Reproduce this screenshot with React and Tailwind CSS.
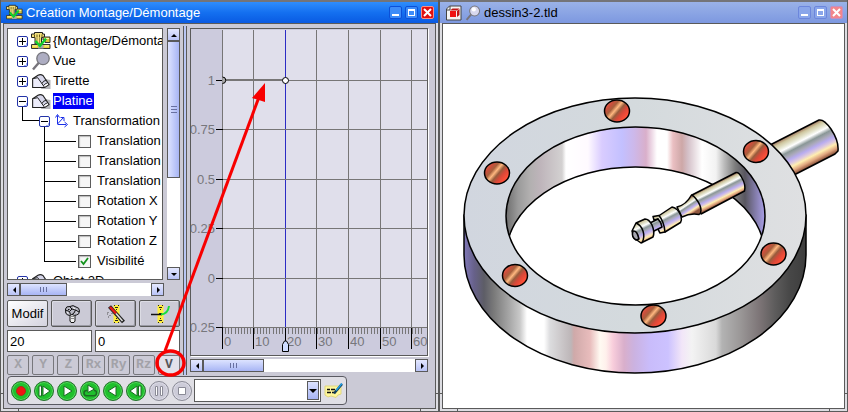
const leaves = [
  { id: 'tx', label: 'Translation' },
  { id: 'ty', label: 'Translation' },
  { id: 'tz', label: 'Translation' },
  { id: 'rx', label: 'Rotation X' },
  { id: 'ry', label: 'Rotation Y' },
  { id: 'rz', label: 'Rotation Z' },
  { id: 'vis', label: 'Visibilité', checked: true },
];

const channels = ['X', 'Y', 'Z', 'Rx', 'Ry', 'Rz', 'V'];

const gridX = [
  { x: 31, label: '0' },
  { x: 62, label: '10' },
  { x: 94, label: '20' },
  { x: 125, label: '30' },
  { x: 157, label: '40' },
  { x: 189, label: '50' },
  { x: 220, label: '60' },
];

const gridY = [
  { y: 51, label: '1' },
  { y: 100, label: '0.75' },
  { y: 150, label: '0.5' },
  { y: 199, label: '0.25' },
  { y: 249, label: '0' },
  { y: 298, label: '0.25' },
];

const bolts = [
  [617, 111],
  [756, 151.5],
  [497, 173],
  [515, 275.5],
  [773.5, 254],
  [653.5, 316],
];

const innerWall = [
  [506, '#6e6e6e'], [518, '#9a9a9a'], [530, '#b2b0b0'], [540, '#beb4ba'], [562, '#d3d1d1'], [566, '#ffffff'],
  [588, '#fffaff'], [602, '#d9ccff'], [622, '#c3c0ff'], [634, '#cdb8ea'], [646, '#d9afca'], [657, '#ffffff'],
  [667, '#ffffff'], [673, '#eabfc2'], [682, '#cda7a7'], [688, '#d4c0c8'], [702, '#ffffff'], [716, '#f2f2f2'],
  [724, '#bdbdbd'], [735, '#7d7d7d'], [745, '#58565f'], [754, '#7d77a0'], [765, '#aaa0e8'],
];

const outerWall = [
  [464, '#8078b8'], [474, '#67618a'], [484, '#5d5d66'], [494, '#7a7a7a'], [510, '#a9a9a9'], [520, '#c9c9c9'],
  [527, '#ffffff'], [544, '#ffffff'], [550, '#dcdcde'], [571, '#bdb6b8'], [574, '#cfa9a9'], [590, '#e8bcbc'],
  [600, '#fffaf2'], [606, '#fff0ec'], [613, '#f8cddb'], [624, '#d9afcb'], [634, '#cbb2e0'], [650, '#c9bcfb'],
  [668, '#ccc2ff'], [682, '#f2e6f8'], [692, '#f3f3f3'], [716, '#d9d9d9'], [722, '#b3b3b3'], [740, '#9b9898'],
  [760, '#7c7476'], [775, '#5d5c5c'], [790, '#474747'], [806, '#3d3d3d'],
];

const rodStops = [
  [0, '#9c6f58'], [10, '#cfc79f'], [22, '#e9ead8'], [29, '#ffffff'], [40, '#8a9797'], [50, '#a9a9b8'],
  [60, '#b8acf0'], [70, '#ddc9de'], [79, '#ffeeb0'], [90, '#e0a57e'], [100, '#8f573f'],
];

function WindowButton({ kind, inactive }) {
  const color = kind === 'close'
    ? (inactive ? 'bg-[#f2868c] border-[#c58fc0]' : 'bg-[#e01010] border-[#ff8a80]')
    : (inactive ? 'bg-[#8aa6ea] border-[#6c86dc]' : 'bg-[#3d8cf8] border-[#0b50d8]');
  return (
    <button type="button" aria-label={kind} className={`w-[13px] h-[13px] border rounded-xs flex items-center justify-center ${color}`}>
      <svg className="w-[11px] h-[11px]" viewBox="0 0 11 11" fill="none" stroke="white" shapeRendering={kind === 'close' ? 'auto' : 'crispEdges'}>
        {kind === 'minimize' && <path d="M2 8h7" strokeWidth="2" />}
        {kind === 'maximize' && <path d="M2.500 3h6v5.500h-6zM2 2.500h7" strokeWidth="1.300" />}
        {kind === 'close' && <path d="M2 2l7 7M9 2l-7 7" strokeWidth="2" />}
      </svg>
    </button>
  );
}

function WindowFrame({ title, icon, inactive, children }) {
  return (
    <section className="relative flex flex-col min-w-0 border-l border-r border-b border-[#5a5a5a] bg-[#dddde2]">
      <header className={`h-[23px] shrink-0 flex items-center gap-[3px] pr-1 border-t-2 border-[#747478] bg-linear-to-b ${inactive ? 'pl-[6px] from-[#9ab2e8] to-[#7d98e0]' : 'pl-[5px] from-[#2f8dfc] via-[#1470f0] to-[#0a5ae2]'}`}>
        {icon}
        <h1 className={`flex-1 truncate text-[13px] leading-4 ${inactive ? 'text-black' : 'text-white'}`}>{title}</h1>
        <div className="flex gap-[3px]">
          <WindowButton kind="minimize" inactive={inactive} />
          <WindowButton kind="maximize" inactive={inactive} />
          <WindowButton kind="close" inactive={inactive} />
        </div>
      </header>
      <div className="flex-1 flex flex-col mx-[2px] mb-[2px] border border-[#5a5a5a]">{children}</div>
      {/* resize corner marks */}
      <span className="absolute left-0 bottom-[17px] w-[3px] h-px bg-[#5a5a5a]" />
      <span className="absolute right-0 bottom-[17px] w-[3px] h-px bg-[#5a5a5a]" />
      <span className="absolute left-[17px] bottom-0 w-px h-[3px] bg-[#5a5a5a]" />
      <span className="absolute right-[17px] bottom-0 w-px h-[3px] bg-[#5a5a5a]" />
    </section>
  );
}

function AssemblyIcon({ small }) {
  return (
    <svg className={small ? 'w-[17px] h-[17px] shrink-0' : 'w-5 h-5 shrink-0'} viewBox="0 0 20 20">
      <path d="M.5 3h3V1.500h8V3h2v3.500h-3V13H4V6.500H.5z" fill="#f4e27c" stroke="#222" />
      <path d="M3.500 3.500v3M6 3.500v3M8.500 3.500v3M11 3.500v3" stroke="#6a5a18" />
      <path d="M6 7v6M8.500 7v6" stroke="#8a7c40" strokeWidth=".8" />
      <path d="M12 6h7v5.500h-5V9h-2z" fill="#d8c83c" stroke="#333" />
      <path d="M13 7.500h5" stroke="#fff8b8" />
      <path d="M.5 13.500h18.500v4H.5z" fill="#e8cf3c" stroke="#333" />
      <path d="M7 14h5.500v3.500H7z" fill="#a8a8a8" />
      <path d="M1.500 15h4.500M13.500 15h4.500" stroke="#fff6a8" />
      <path d="M4.500 10l4.500 5 6-7.500" fill="none" stroke="#0fd02c" strokeWidth="2.400" />
    </svg>
  );
}

function LensIcon({ small }) {
  return (
    <svg className={small ? 'w-4 h-4 shrink-0' : 'w-5 h-5 shrink-0'} viewBox="0 0 20 20">
      <path d="M2 18.500l6-7" stroke="#77747c" strokeWidth="2.400" />
      <circle cx="12" cy="7.500" r="6.200" fill={small ? '#d8d8ee' : '#adadc2'} stroke="#76767c" strokeWidth="1.300" />
      {small && <circle cx="11" cy="5.500" r="2.600" fill="#fff" />}
    </svg>
  );
}

function SolidIcon() {
  return (
    <svg className="w-5 h-5 shrink-0" viewBox="0 0 20 20">
      <path d="M14 8l5.500 1v9H10z" fill="#b4b4ba" />
      <path d="M1.700 7.700L7 4.200Q9.500 3 12 4.500L18 13.500 13.500 16.500H1.700z" fill="#d6d6ea" stroke="#222" strokeWidth="1.200" strokeLinejoin="round" />
      <path d="M1.700 7.700l5-1 7 9.800H1.700z" fill="#ececfa" stroke="#222" strokeLinejoin="round" />
      <path d="M11 12.500q1-3 4.500-3.200M12.500 15q1-2.500 4.500-3.300" fill="none" stroke="#222" />
      <path d="M13 14.500l3.500-2.300.8 1.200-3.500 2.400z" fill="#fff" />
    </svg>
  );
}

function AxesIcon() {
  return (
    <svg className="w-4 h-4 shrink-0" viewBox="0 0 16 16" fill="none" stroke="#1a2ee8">
      <path d="M3.500 11V2.500M1.500 4.500l2-3 2 3M3.500 11.500H12M10.500 9l3 2.500-3 2.500M3.500 11L9.500 4.500M6.500 4.500h3.500v3.500" />
    </svg>
  );
}

function Expander({ open, label }) {
  return (
    <span className="h-5 w-[11px] pt-[5px] flex flex-col items-center shrink-0">
      <button type="button" aria-label={label} aria-expanded={Boolean(open)} className="w-[11px] h-[11px] shrink-0 border border-[#2333a8] rounded-xs bg-white flex items-center justify-center">
        <svg className="w-[9px] h-[9px]" viewBox="0 0 9 9" stroke="#000" shapeRendering="crispEdges">
          <path d="M6 8.500h3M8.500 6v3" stroke="#9fb0f0" />
          <path d={open ? 'M1 4.500h7' : 'M1 4.500h7M4.500 1v7'} />
        </svg>
      </button>
      {open && <span className="w-px flex-1 bg-black" />}
    </span>
  );
}

function Branch({ icon, label, open, selected }) {
  return (
    <li className="h-5 flex items-center gap-[2px] pl-[9px]">
      <Expander open={open} label={label} />
      <span className="ml-px flex">{icon}</span>
      <span className={selected ? 'bg-[#0000f8] text-white leading-4 pr-px' : 'leading-4'}>{label}</span>
    </li>
  );
}

function Leaf({ id, label, checked, last }) {
  return (
    <li className="h-5 flex items-center">
      <span className="ml-9 mr-[2px] w-8 self-stretch shrink-0 flex flex-col">
        <span className="flex-1 border-l border-b border-black" />
        <span className={last ? 'flex-1' : 'flex-1 border-l border-black'} />
      </span>
      <span className="grid shrink-0 place-items-center">
        <input
          id={id}
          type="checkbox"
          defaultChecked={checked}
          className="peer appearance-none col-start-1 row-start-1 w-[13px] h-[13px] border border-[#5c5c5c] bg-[#f6f6f6] shadow-[inset_1px_1px_1px_#b8b8b8]"
        />
        <svg className="hidden peer-checked:block pointer-events-none z-10 col-start-1 row-start-1 w-[13px] h-[13px]" viewBox="0 0 13 13" fill="none">
          <path d="M3 6l2.500 3 4.500-6" stroke="#12921c" strokeWidth="1.800" />
        </svg>
      </span>
      <label htmlFor={id} className="ml-[6px] leading-4">{label}</label>
    </li>
  );
}

function ScrollArrow({ dir }) {
  const paths = {
    up: 'M2 7h6L5 4z',
    down: 'M2 4h6L5 7z',
    left: 'M7 2v6L4 5z',
    right: 'M4 2v6l3-3z',
  };
  return (
    <button type="button" aria-label={dir} className="w-[13px] h-[13px] shrink-0 border border-[#5a5a5a] bg-linear-to-b from-[#e4e8ff] to-[#b9c3f6] flex items-center justify-center">
      <svg className="w-[10px] h-[10px]" viewBox="0 0 10 10"><path d={paths[dir]} fill="#000" /></svg>
    </button>
  );
}

function HScroll({ thumb }) {
  return (
    <div className="h-[13px] flex bg-white">
      <ScrollArrow dir="left" />
      <div className={`${thumb} border border-[#5a5a5a] bg-linear-to-b from-[#dde3ff] to-[#a8b5f4] flex items-center justify-center gap-[2px]`}>
        <span className="w-px h-[5px] bg-[#6870a0]" />
        <span className="w-px h-[5px] bg-[#6870a0]" />
        <span className="w-px h-[5px] bg-[#6870a0]" />
      </div>
      <div className="flex-1" />
      <ScrollArrow dir="right" />
    </div>
  );
}

function TreePanel() {
  return (
    <div>
      <div className="flex gap-1">
        <ul className="flex-1 min-w-0 h-63 pt-[2px] border border-[#5a5a5a] bg-white overflow-hidden whitespace-nowrap">
          <Branch icon={<AssemblyIcon />} label="{Montage/Démonta" />
          <Branch icon={<LensIcon />} label="Vue" />
          <Branch icon={<SolidIcon />} label="Tirette" />
          <Branch icon={<SolidIcon />} label="Platine" open selected />
          <li className="h-5 flex items-center">
            <span className="ml-[14px] w-[17px] h-[10px] self-start shrink-0 border-l border-b border-black" />
            <Expander open label="Transformation" />
            <span className="ml-1 mr-[3px] flex"><AxesIcon /></span>
            <span className="leading-4">Transformation</span>
          </li>
          {leaves.map((leaf, i) => (
            <Leaf key={leaf.id} {...leaf} last={i === leaves.length - 1} />
          ))}
          <Branch icon={<SolidIcon />} label="Objet 2D" />
        </ul>
        <div className="w-[13px] shrink-0 flex flex-col bg-white">
          <ScrollArrow dir="up" />
          <div className="h-[137px] border border-[#5a5a5a] bg-linear-to-r from-[#dde3ff] to-[#a8b5f4] flex flex-col items-center justify-center gap-[2px]">
            <span className="h-px w-[6px] bg-[#6870a0]" />
            <span className="h-px w-[6px] bg-[#6870a0]" />
            <span className="h-px w-[6px] bg-[#6870a0]" />
          </div>
          <div className="flex-1" />
          <ScrollArrow dir="down" />
        </div>
      </div>
      <div className="mt-[3px] mr-4">
        <HScroll thumb="w-[47px]" />
      </div>
    </div>
  );
}

function ToolButton({ label, children }) {
  return (
    <button type="button" aria-label={label} className="h-[27px] border border-[#5a5a5a] rounded-xs bg-[#cbcad6] shadow-[inset_-1px_-1px_0_#9a9aa4,inset_1px_1px_0_#dcdce4] flex items-center justify-center">
      {children}
    </button>
  );
}

function YellowRuler() {
  return (
    <>
      <path d="M7.500 1h6v18h-6z" fill="#ffee3c" />
      <path d="M8 1.500h1M12 1.500h1M9 3.500h3M10 5.500h1M8 18.500h1M12 18.500h1M9 16.500h3M10 14.500h1M9 9.500h3" stroke="#222" />
    </>
  );
}

function EditPanel() {
  return (
    <div className="mt-1 flex flex-col gap-[3px]">
      <div className="grid grid-cols-4 gap-[3px]">
        <button type="button" className="h-[27px] border border-[#5a5a5a] rounded-xs bg-linear-to-br from-white to-[#d4d3df] text-black">Modif</button>
        <ToolButton label="Vis">
          <svg className="w-5 h-5" viewBox="0 0 20 20" fill="#c4c4ca" stroke="#111">
            <path d="M8 10h5v7l-1 1.500H9L8 17z" fill="#f2f2f2" />
            <path d="M8.500 12.500h4M8.500 14.500h4" stroke="#888" />
            <path d="M3.500 5Q4 2 8 2.500 11 .5 14 3q3.500.5 3.500 4t-3 4q-2 1-4.500-.5-2 1.500-4.500.5Q3 10 3.500 5z" fill="#b9b9c4" />
            <path d="M3.500 6l4 1.500L10 5l3.500 1 3.500 2M7.500 7.500l1 3M13.500 6L12 9l-2 1.500M8 3l2 2M6 5.500h1.500" fill="none" />
            <path d="M11 3.500l2 1.500M5 8.500l1.500.8M14.500 8l1 .8" stroke="#fff" />
          </svg>
        </ToolButton>
        <ToolButton label="Mesure">
          <svg className="w-5 h-5" viewBox="0 0 20 20" fill="none">
            <YellowRuler />
            <path d="M3.500 2.500L17.500 18" stroke="#222" strokeWidth="4" />
            <path d="M4 3l6 6.500" stroke="#e81818" strokeWidth="2.500" />
            <path d="M10 9.500l6.500 7.500" stroke="#e0e0e0" strokeWidth="1.500" />
            <path d="M2 8v1M1 10h1M4 11v1M6 9v1M2 13h1" stroke="#555" />
          </svg>
        </ToolButton>
        <ToolButton label="Courbe">
          <svg className="w-5 h-5" viewBox="0 0 20 20" fill="none">
            <YellowRuler />
            <path d="M1 10.500h11" stroke="#111" strokeWidth="1.500" />
            <path d="M11 10.500Q18 10 19 2" stroke="#18e038" strokeWidth="2" />
          </svg>
        </ToolButton>
      </div>
      <div className="grid grid-cols-2 gap-[3px]">
        <input aria-label="Temps" defaultValue="20" className="min-w-0 h-[22px] px-[2px] border border-[#5a5a5a] bg-white" />
        <input aria-label="Valeur" defaultValue="0" className="min-w-0 h-[22px] px-[2px] border border-[#5a5a5a] bg-white" />
      </div>
      <div className="grid grid-cols-7 gap-[3px]">
        {channels.map((name) => (
          <button
            key={name}
            type="button"
            className={`h-5 border rounded-xs font-['Liberation_Mono',monospace] font-bold leading-4 ${name === 'V' ? 'border-[#77777c] bg-[#e2e1ea] text-[#55555a]' : 'border-[#77777c] bg-[#cbcad6] text-[#a2a2a8]'}`}
          >
            {name}
          </button>
        ))}
      </div>
    </div>
  );
}

function CurveChart() {
  const minorTicks = Array.from({ length: 64 }, (_, i) => Math.round(31 + i * 3.16));
  return (
    <div className="border border-[#5a5a5a] bg-[#cccbdd] shadow-[1px_1px_0_#fff]">
      <svg className="block w-full h-[326px]" shapeRendering="crispEdges">
        <rect x="31" y="1" width="100%" height="297" fill="#e0dfeb" />
        <g stroke="#777676">
          {gridX.map(({ x }) => <line key={x} x1={x + 0.5} x2={x + 0.5} y1="1" y2="298" stroke={x === 94 ? '#2c2cc4' : '#777676'} />)}
          {gridY.map(({ y }) => <line key={y} x1="31" x2="100%" y1={y + 0.5} y2={y + 0.5} />)}
          {minorTicks.map((x) => <path key={x} d={`M${x + 0.5} 298v7`} />)}
        </g>
        <g stroke="#000">
          {gridY.map(({ y }) => <path key={y} d={`M25 ${y + 0.5}h7`} />)}
          {gridX.map(({ x }) => <path key={x} d={`M${x + 0.5} 299v21`} />)}
        </g>
        <g fill="#77777c" fontSize="13">
          {gridY.map(({ y, label }) => <text key={y} x="24" y={y + 5} textAnchor="end">{label}</text>)}
          {gridX.map(({ x, label }) => <text key={x} x={x + 2} y="317">{label}</text>)}
        </g>
        <path d="M31 51h63" stroke="#777676" strokeWidth="2" />
        <g stroke="#000" shapeRendering="auto">
          <path d="M31.500 48a3 3 0 0 1 0 6.500" fill="#aaa" />
          <circle cx="94.500" cy="51.500" r="3" fill="#fff" />
          <path d="M91.500 322.500v-7l2-3.500h2l2 3.500v7z" fill="#cfdcff" />
        </g>
      </svg>
    </div>
  );
}

function PlayButton({ label, disabled, children }) {
  return (
    <button
      type="button"
      aria-label={label}
      className={`w-5 h-5 shrink-0 rounded-full border flex items-center justify-center ${disabled ? 'border-[#8a8a96] bg-[#cccbd8] shadow-[inset_0_0_0_1px_#dedde8]' : 'border-[#28702e] bg-[#1fc02c] shadow-[inset_0_0_0_1px_#58d860]'}`}
    >
      <svg className="w-[18px] h-[18px]" viewBox="0 0 18 18" stroke="#1c6a22">{children}</svg>
    </button>
  );
}

function Playback() {
  return (
    <div className="mt-px self-start flex items-center h-[29px] pl-[3px] pr-[2px] border border-[#5a5a62] rounded-sm bg-[#e0dfe5]">
      <div className="flex gap-[3px]">
        <PlayButton label="Enregistrer"><circle cx="9" cy="9" r="4.500" fill="#f01414" stroke="#a83018" /></PlayButton>
        <PlayButton label="Pas avant"><path d="M4 4h2.500v10H4zM8 4l7 5-7 5z" fill="#fff" /></PlayButton>
        <PlayButton label="Lecture"><path d="M6 4l8 5-8 5z" fill="#fff" /></PlayButton>
        <PlayButton label="Boucle">
          <path d="M6.500 8.500H5.500q-2.500 0-2.500 2.500t2.500 2.700h7.500q2.500 0 2.500-2.700T13 8.500" fill="none" strokeWidth="1.500" />
          <path d="M7 3l6.500 4L7 10.500z" fill="#fff" />
        </PlayButton>
        <PlayButton label="Lecture arrière"><path d="M12 4L4 9l8 5z" fill="#fff" /></PlayButton>
        <PlayButton label="Pas arrière"><path d="M11.500 4h2.500v10h-2.500zM10 4L3 9l7 5z" fill="#fff" /></PlayButton>
        <PlayButton label="Pause" disabled><path d="M5.500 4.500h2v9h-2zM10.500 4.500h2v9h-2z" fill="#fff" stroke="#8a8a96" /></PlayButton>
        <PlayButton label="Arrêt" disabled><path d="M5.500 5.500h7v7h-7z" fill="#fff" stroke="#8a8a96" /></PlayButton>
      </div>
      <div className="ml-[2px] h-[23px] grid">
        <select aria-label="Animation" className="appearance-none col-start-1 row-start-1 w-[127px] border border-[#5a5a5a] bg-white px-1">
          <option></option>
        </select>
        <span className="pointer-events-none z-10 col-start-1 row-start-1 justify-self-end my-[2px] mr-[2px] w-3 border border-[#5a5a5a] bg-linear-to-b from-[#dde3ff] to-[#a8b5f4] flex items-center justify-center">
          <svg className="w-2 h-2" viewBox="0 0 8 8"><path d="M0 2h8L4 6z" fill="#000" /></svg>
        </span>
      </div>
      <button type="button" aria-label="Notes" className="ml-[3px]">
        <svg className="w-5 h-5" viewBox="0 0 20 20" fill="none">
          <path d="M1 5h16v8l-3 1-2 2.500-5-1.500-3 1-3-2z" fill="#fff79a" stroke="#e0d680" />
          <path d="M3 8.500h3M7 8.500h4M3 11.500h4M8 11.500h2" stroke="#111" strokeWidth="1.500" />
          <path d="M10 12.500l8-9.500" stroke="#123c58" strokeWidth="2.500" />
          <path d="M12 9.500l6-7" stroke="#20a0e8" strokeWidth="1.500" />
        </svg>
      </button>
    </div>
  );
}

function Arrow() {
  return (
    <svg className="absolute left-0 top-0 z-20 w-[300px] h-[400px] pointer-events-none" viewBox="1 0 300 400" fill="none" stroke="#f80000">
      <path d="M165 351L259 97" strokeWidth="3" />
      <path d="M265 83l-13 15 13 4z" fill="#f80000" stroke="none" />
      <ellipse cx="170.500" cy="363" rx="13.500" ry="12" strokeWidth="3.500" />
    </svg>
  );
}

function WallGradient({ id, from, to, stops }) {
  return (
    <linearGradient id={id} gradientUnits="userSpaceOnUse" x1={from} x2={to} y1="0" y2="0">
      {stops.map(([x, color]) => <stop key={x} offset={(x - from) / (to - from)} stopColor={color} />)}
    </linearGradient>
  );
}

function RodGradient({ id, x1, y1, x2, y2 }) {
  return (
    <linearGradient id={id} gradientUnits="userSpaceOnUse" x1={x1} y1={y1} x2={x2} y2={y2}>
      {rodStops.map(([p, color]) => <stop key={p} offset={`${p}%`} stopColor={color} />)}
    </linearGradient>
  );
}

function PartView() {
  return (
    <svg className="flex-1 w-full bg-white" viewBox="443 24 401 384" stroke="#000" strokeWidth="1.500" strokeLinejoin="round">
      <defs>
        <WallGradient id="inner" from={506} to={765} stops={innerWall} />
        <WallGradient id="outer" from={464} to={806} stops={outerWall} />
        <linearGradient id="face">
          <stop offset="0" stopColor="#d1d6df" />
          <stop offset=".5" stopColor="#d4dadd" />
          <stop offset="1" stopColor="#dfe0e2" />
        </linearGradient>
        <linearGradient id="bolt" x1=".1" y1=".1" x2=".9" y2=".7">
          <stop offset="0" stopColor="#f8604c" />
          <stop offset=".2" stopColor="#c8503c" />
          <stop offset=".34" stopColor="#a8603c" />
          <stop offset=".48" stopColor="#ffb880" />
          <stop offset=".62" stopColor="#985c3c" />
          <stop offset=".78" stopColor="#d84838" />
          <stop offset="1" stopColor="#ff5038" />
        </linearGradient>
        <RodGradient id="rodBack" x1={795} y1={132} x2={812} y2={165} />
        <RodGradient id="rodFront" x1={714} y1={184} x2={723} y2={202} />
        <RodGradient id="rodCollar" x1={665} y1={210} x2={675} y2={229} />
        <RodGradient id="rodNeck" x1={681} y1={204} x2={689} y2={216} />
        <RodGradient id="rodHead" x1={640} y1={220} x2={650} y2={241} />
        <clipPath id="hole"><ellipse cx="635.500" cy="216" rx="129.500" ry="89" /></clipPath>
      </defs>

      {/* rod, part behind the ring */}
      <path d="M771 144.500L819 120Q824 119 831 129 839 141 838 151L835 154 794 175 760 180z" fill="url(#rodBack)" />

      {/* ring */}
      <path d="M464 215v40a171 118 0 0 0 342 0v-40z" fill="url(#outer)" />
      <ellipse cx="635" cy="215.500" rx="171" ry="117.500" fill="url(#face)" />
      <g clipPath="url(#hole)">
        <rect x="500" y="120" width="270" height="190" fill="url(#inner)" stroke="none" />
        <ellipse cx="635.500" cy="256" rx="129.500" ry="89" fill="#fff" />
      </g>
      <ellipse cx="635.500" cy="216" rx="129.500" ry="89" fill="none" />
      {bolts.map(([x, y]) => <ellipse key={x} cx={x} cy={y} rx="12.500" ry="11" fill="url(#bolt)" />)}

      {/* rod, part in front */}
      <path d="M692 195l44-22.500q3-.5 6 5.500 4 7 2.500 13L701 214z" fill="url(#rodFront)" />
      <path d="M691.500 195Q686 205 677 207l5 10q8-4 17-2.500 2-1 2-4 0-5-4.500-11-3-4-5-4.500z" fill="url(#rodNeck)" />
      <path d="M657 217l15-10q6 1 9 9 1 4-.5 6.500L665 232q-9-7-8-15z" fill="url(#rodCollar)" />
      <path d="M653 216.500l6-1q5 6 6 16.500l-5 1q-2-3-3-7l4-2-3-5-4 1z" fill="url(#rodCollar)" />
      <path d="M650 223l8-4q3 3 4 8l-9 4.500z" fill="url(#rodHead)" />
      <path d="M636 223l9-4q4 0 7 6 3 7 1 12l-12 6-7-5-2-7z" fill="url(#rodHead)" />
      <path d="M636 223q5 2 7 8 2 6-1 12" fill="none" />
      <path d="M633 231q4-1 6 8l-3 1q-5-3-3-9z" fill="#a6a6b0" />
    </svg>
  );
}

function DrawingIcon() {
  return (
    <svg className="w-4 h-4 shrink-0" viewBox="0 0 16 16">
      <path d="M.5 15V4l3-3H15v14z" fill="#f4f4f4" stroke="#444" />
      <path d="M1 5h3V1" fill="none" stroke="#444" />
      <path d="M4 6h6v6H4z" fill="#f01414" />
      <path d="M4 5.500l2.500-2h7L11 5.500zM11 6l2.500-2v6L11 12z" fill="#c01818" />
    </svg>
  );
}

export default function App() {
  return (
    <main className="min-h-screen grid grid-cols-[439fr_409fr] bg-[#dddde2] font-['Liberation_Sans',Arial,sans-serif] text-[13px] leading-4 text-black">
      <WindowFrame title="Création Montage/Démontage" icon={<AssemblyIcon small />}>
        <div className="flex-1 flex flex-col pt-[2px] pb-[3px] pl-[3px] pr-[7px] bg-[#cbcad6]">
          <div className="flex">
            <div className="w-[173px] shrink-0 pt-[2px]">
              <TreePanel />
              <EditPanel />
            </div>
            <div className="mx-[3px] w-1 shrink-0 border-x border-[#5a5a5a] bg-[#b9c6f4]" />
            <div className="flex-1 min-w-0 pt-[2px] flex flex-col gap-[3px]">
              <CurveChart />
              <HScroll thumb="w-[61px]" />
            </div>
          </div>
          <Playback />
        </div>
        <Arrow />
      </WindowFrame>
      <WindowFrame
        inactive
        title="dessin3-2.tld"
        icon={<><DrawingIcon /><LensIcon small /></>}
      >
        <PartView />
      </WindowFrame>
    </main>
  );
}
